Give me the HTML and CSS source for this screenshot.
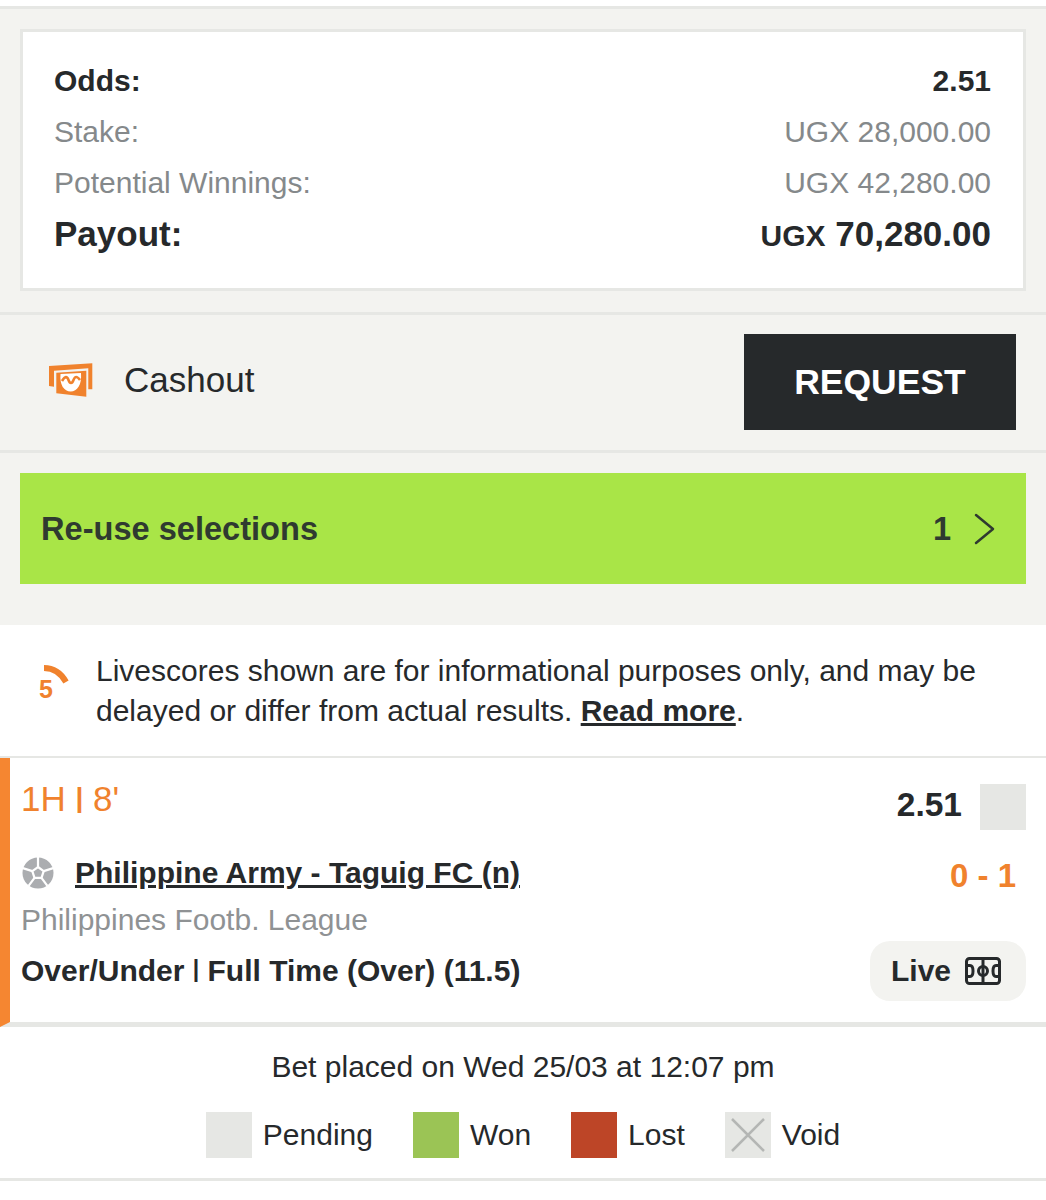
FILE: index.html
```html
<!DOCTYPE html>
<html lang="en">
<head>
    <meta charset="UTF-8">
    <meta name="viewport" content="width=device-width, initial-scale=1.0">
    <title>Bet details</title>
    <link rel="stylesheet" href="styles.css">
</head>
<body>
    <div class="summary">
        <div class="card">
            <div class="row row-bold"><span>Odds:</span><span>2.51</span></div>
            <div class="row row-muted"><span>Stake:</span><span>UGX 28,000.00</span></div>
            <div class="row row-muted"><span>Potential Winnings:</span><span>UGX 42,280.00</span></div>
            <div class="row row-payout"><span>Payout:</span><span><small>UGX</small> 70,280.00</span></div>
        </div>
    </div>

    <div class="cashout">
        <div class="cashout-label">
            <svg class="cashout-icon" width="44" height="34" viewBox="0 0 44 34">
                <path d="M0 3 L43.300 0.300 V26.300 H39.300 V5.300 L5 7.700 V23.700 L0 23 Z" fill="#f0822d"/>
                <path d="M7.300 9.700 L37.300 7.700 V33.700 L7.300 30.300 Z" fill="#f0822d"/>
                <path d="M11.500 11 L32 10 C33 22 28 28.500 21.700 28.500 C15 28.500 10.500 22 11.500 11 Z" fill="#fff"/>
                <path d="M13 18 C16 13 18 13 19.500 17 C21 21 23 21 24.500 17 C26 13 28 13 31 17" fill="none" stroke="#f0822d" stroke-width="2.600"/>
            </svg>
            <span>Cashout</span>
        </div>
        <button class="request">REQUEST</button>
    </div>

    <div class="reuse-wrap">
        <div class="reuse">
            <span>Re-use selections</span>
            <div class="reuse-count">
                <span>1</span>
                <svg width="22" height="32" viewBox="0 0 22 32"><path d="M2 2 L19 16 L2 30" fill="none" stroke="#2f3a30" stroke-width="2.500" stroke-linecap="round" stroke-linejoin="round"/></svg>
            </div>
        </div>
    </div>

    <div class="notice">
        <div class="notice-icon">
            <svg width="36" height="26" viewBox="0 0 36 26"><path d="M7 3 C17 3 24 8 29 17" fill="none" stroke="#f0822d" stroke-width="6"/></svg>
            <b>5</b>
        </div>
        <p>Livescores shown are for informational purposes only, and may be delayed or differ from actual results. <a href="#">Read more</a>.</p>
    </div>

    <div class="bet">
        <div class="bet-top">
            <span class="bet-time">1H <span class="pipe">|</span> 8'</span>
            <div class="bet-odds"><b>2.51</b><i class="swatch swatch-pending"></i></div>
        </div>
        <div class="bet-match">
            <div class="match-name">
                <svg width="32" height="32" viewBox="0 0 32 32">
                    <circle cx="16" cy="16" r="15.500" fill="#abadb0"/>
                    <g stroke="#fff" stroke-width="2.200" fill="none">
                        <path d="M16 10 L21.700 14.100 L19.500 20.900 H12.500 L10.300 14.100 Z"/>
                        <path d="M16 10 V0 M21.700 14.100 L31.200 11.100 M19.500 20.900 L25.400 28.900 M12.500 20.900 L6.600 28.900 M10.300 14.100 L0.800 11.100"/>
                    </g>
                </svg>
                <a href="#">Philippine Army - Taguig FC (n)</a>
            </div>
            <span class="score">0 - 1</span>
        </div>
        <div class="league">Philippines Footb. League</div>
        <div class="bet-market">
            <b>Over/Under <span class="pipe-small">|</span> Full Time (Over) (11.5)</b>
            <div class="live">
                <span>Live</span>
                <svg width="36" height="28" viewBox="0 0 36 28" fill="none" stroke="#26292b" stroke-width="3">
                    <rect x="1.500" y="1.500" width="33" height="25" rx="3"/>
                    <path d="M18 1.500 V26.500"/>
                    <circle cx="18" cy="14" r="4.500"/>
                    <path d="M1.500 8.500 H5 C7.500 8.500 8 11 8 14 C8 17 7.500 19.500 5 19.500 H1.500"/>
                    <path d="M34.500 8.500 H31 C28.500 8.500 28 11 28 14 C28 17 28.500 19.500 31 19.500 H34.500"/>
                </svg>
            </div>
        </div>
    </div>

    <div class="footer">
        <p>Bet placed on Wed 25/03 at 12:07 pm</p>
        <div class="legend">
            <div class="legend-item"><i class="swatch swatch-pending"></i>Pending</div>
            <div class="legend-item"><i class="swatch swatch-won"></i>Won</div>
            <div class="legend-item"><i class="swatch swatch-lost"></i>Lost</div>
            <div class="legend-item">
                <i class="swatch swatch-pending">
                    <svg width="46" height="46" viewBox="0 0 46 46"><path d="M7 7 L39 39 M39 7 L7 39" stroke="#b4b6b4" stroke-width="2.500"/></svg>
                </i>Void
            </div>
        </div>
    </div>
</body>
</html>
```

FILE: styles.css
```css
body {
    margin: 0;
    font-family: "Liberation Sans", Arial, sans-serif;
    color: #26292b;
    background-color: #fff;
}
p {
    margin: 0;
}
.summary {
    margin-top: 6px;
    padding: 20px 20px 21px;
    background-color: #f3f3f0;
    border-top: 3px solid #e6e7e4;
}
.card {
    padding: 24px 32px 29px 31px;
    background: white;
    border: 3px solid #e6e7e4;
}
.row {
    display: flex;
    justify-content: space-between;
    align-items: center;
    height: 50.750px;
    font-size: 30px;
}
.row-bold {
    font-weight: bold;
}
.row-muted {
    color: #85898b;
}
.row-payout {
    font-size: 35px;
    font-weight: bold;
}
.row-payout small {
    font-size: 30px;
}
.cashout {
    display: flex;
    justify-content: space-between;
    align-items: center;
    height: 135px;
    padding: 0 30px 0 49px;
    background-color: #f3f3f0;
    border-top: 3px solid #e6e7e4;
    border-bottom: 3px solid #e6e7e4;
}
.cashout-label {
    display: flex;
    align-items: center;
    gap: 31px;
    padding-bottom: 6px;
    font-size: 35px;
}
.request {
    width: 272px;
    height: 96px;
    margin-bottom: 1px;
    background-color: #26292b;
    color: white;
    border: none;
    font-family: inherit;
    font-size: 35.500px;
    font-weight: bold;
}
.reuse-wrap {
    padding: 20px 20px 41px;
    background-color: #f3f3f0;
}
.reuse {
    display: flex;
    justify-content: space-between;
    align-items: center;
    height: 111px;
    padding: 0 30px 0 21px;
    background-color: #a9e547;
    color: #2f3a30;
    font-size: 32.600px;
    font-weight: bold;
}
.reuse-count {
    display: flex;
    align-items: center;
    gap: 23px;
}
.notice {
    display: flex;
    align-items: center;
    height: 131px;
    padding-left: 32px;
    border-bottom: 2px solid #e6e7e4;
}
.notice-icon {
    position: relative;
    flex: none;
    width: 64px;
    height: 52px;
}
.notice-icon svg {
    position: absolute;
    left: 5px;
    top: 0;
}
.notice-icon b {
    position: absolute;
    left: 7px;
    top: 10px;
    color: #f0822d;
    font-size: 25px;
}
.notice p {
    font-size: 30px;
    line-height: 40px;
}
.notice a {
    color: inherit;
    font-weight: bold;
}
.bet {
    height: 264px;
    padding: 0 20px 0 11px;
    border-left: 10px solid #f58631;
    border-bottom: 5px solid #e6e7e4;
}
.bet-top {
    display: flex;
    justify-content: space-between;
    align-items: flex-start;
    height: 92px;
    padding-top: 24px;
    box-sizing: border-box;
}
.bet-time {
    margin-top: -2px;
    color: #f0822d;
    font-size: 35px;
    line-height: 36px;
}
.pipe {
    font-size: 28px;
    font-weight: bold;
    vertical-align: 4px;
}
.pipe-small {
    font-size: 23px;
    vertical-align: 4px;
}
.bet-odds {
    display: flex;
    align-items: center;
    gap: 18px;
    margin-top: 2px;
    font-size: 33.500px;
}
.bet-odds b {
    margin-bottom: 4px;
}
.swatch {
    display: block;
    flex: none;
    width: 46px;
    height: 46px;
}
.swatch-pending {
    background-color: #e6e7e4;
}
.swatch-won {
    background-color: #9bc455;
}
.swatch-lost {
    background-color: #bd4527;
}
.bet-match {
    display: flex;
    justify-content: space-between;
    align-items: center;
    height: 46px;
    padding-right: 10px;
}
.match-name {
    display: flex;
    align-items: center;
    gap: 21px;
    margin-left: 1px;
}
.match-name a {
    color: inherit;
    font-size: 30px;
    font-weight: bold;
}
.score {
    margin-top: 6px;
    color: #f0822d;
    font-size: 33px;
    font-weight: bold;
}
.league {
    margin-top: 6px;
    color: #8f9294;
    font-size: 30px;
    line-height: 36px;
}
.bet-market {
    display: flex;
    justify-content: space-between;
    align-items: center;
    height: 64px;
    margin-top: 1px;
    font-size: 30px;
}
.live {
    display: flex;
    align-items: center;
    gap: 14px;
    height: 60px;
    padding: 0 25px 0 21px;
    background-color: #f3f3f0;
    border-radius: 20px;
    font-weight: bold;
}
.footer {
    padding: 20px 0 20px;
    border-bottom: 3px solid #e6e7e4;
    font-size: 30px;
    text-align: center;
}
.footer p {
    line-height: 40px;
}
.legend {
    display: flex;
    justify-content: center;
    gap: 40px;
    margin-top: 25px;
}
.legend-item {
    display: flex;
    align-items: center;
    gap: 11px;
}
```
